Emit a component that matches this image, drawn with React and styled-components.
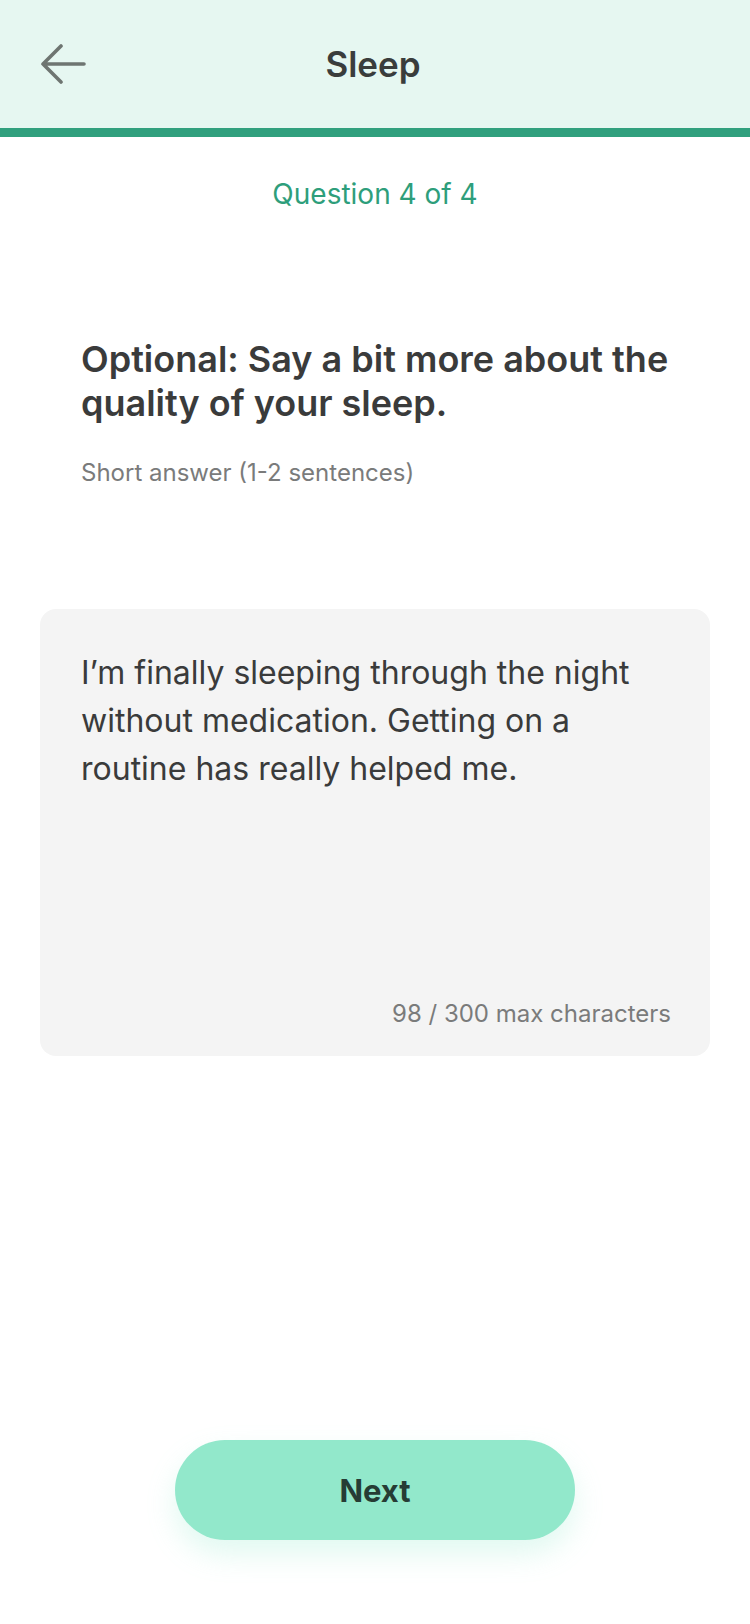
import React from "react";
import styled, { createGlobalStyle } from "styled-components";

const Global = createGlobalStyle`
  html, body { margin: 0; padding: 0; background: #ffffff; }
  body { font-family: Inter, "Noto Sans", sans-serif; -webkit-font-smoothing: antialiased; }
  * { box-sizing: border-box; }
`;

const Page = styled.div`
  width: 750px;
  min-height: 1624px;
  display: flex;
  flex-direction: column;
  background: #ffffff;
`;

const Header = styled.header`
  height: 137px;
  background: #e6f7f1;
  border-bottom: 9px solid #31a07e;
  display: grid;
  grid-template-columns: 120px 1fr 120px;
  align-items: center;
`;

const BackButton = styled.button`
  border: 0;
  background: transparent;
  padding: 0 0 0 40px;
  height: 60px;
  display: flex;
  align-items: center;
  cursor: pointer;
`;

const Title = styled.h1`
  margin: 0;
  text-align: center;
  font-size: 35px;
  font-weight: 600;
  color: #3a3d3c;
  letter-spacing: 0;
  transform: translateX(-2px);
`;

const Progress = styled.div`
  padding-top: 40px;
  text-align: center;
  font-size: 28px;
  line-height: 34px;
  color: #2e9e7b;
`;

const QuestionBlock = styled.section`
  padding: 126px 30px 0 81px;
`;

const QuestionText = styled.h2`
  margin: 0;
  font-size: 36px;
  line-height: 44px;
  font-weight: 600;
  color: #3a3b3b;
  max-width: 620px;
`;

const Hint = styled.p`
  margin: 34px 0 0;
  font-size: 24px;
  line-height: 28px;
  color: #7a7b7b;
`;

const AnswerBox = styled.div`
  margin: 122px 40px 0;
  height: 447px;
  background: #f4f4f4;
  border-radius: 16px;
  padding: 40px 39px 28px 41px;
  display: flex;
  flex-direction: column;
`;

const AnswerText = styled.p`
  margin: 0;
  font-size: 32px;
  line-height: 48px;
  color: #3a3b3b;
  max-width: 580px;
`;

const Counter = styled.div`
  margin-top: auto;
  text-align: right;
  font-size: 24px;
  line-height: 28px;
  color: #7a7b7b;
`;

const Footer = styled.div`
  margin-top: auto;
  padding-bottom: 84px;
  display: flex;
  justify-content: center;
`;

const NextButton = styled.button`
  width: 400px;
  height: 100px;
  border: 0;
  border-radius: 50px;
  background: #92e8cb;
  color: #263c34;
  font-family: Inter, "Noto Sans", sans-serif;
  font-size: 31px;
  font-weight: 700;
  box-shadow: 0 14px 28px rgba(146, 232, 203, 0.28);
  cursor: pointer;
`;

const BackIcon = () => (
  <svg width="46" height="40" viewBox="0 0 46 40" fill="none">
    <path
      d="M44 20H3M3 20L21 2M3 20L21 38"
      stroke="#6e7571"
      strokeWidth="3.6"
      strokeLinecap="round"
      strokeLinejoin="round"
    />
  </svg>
);

export default function App() {
  return (
    <Page>
      <Global />
      <Header>
        <BackButton aria-label="Back">
          <BackIcon />
        </BackButton>
        <Title>Sleep</Title>
        <span />
      </Header>
      <Progress>Question 4 of 4</Progress>
      <QuestionBlock>
        <QuestionText>Optional: Say a bit more about the quality of your sleep.</QuestionText>
        <Hint>Short answer (1-2 sentences)</Hint>
      </QuestionBlock>
      <AnswerBox>
        <AnswerText>
          I’m finally sleeping through the night without medication. Getting on a routine has really helped me.
        </AnswerText>
        <Counter>98 / 300 max characters</Counter>
      </AnswerBox>
      <Footer>
        <NextButton>Next</NextButton>
      </Footer>
    </Page>
  );
}
